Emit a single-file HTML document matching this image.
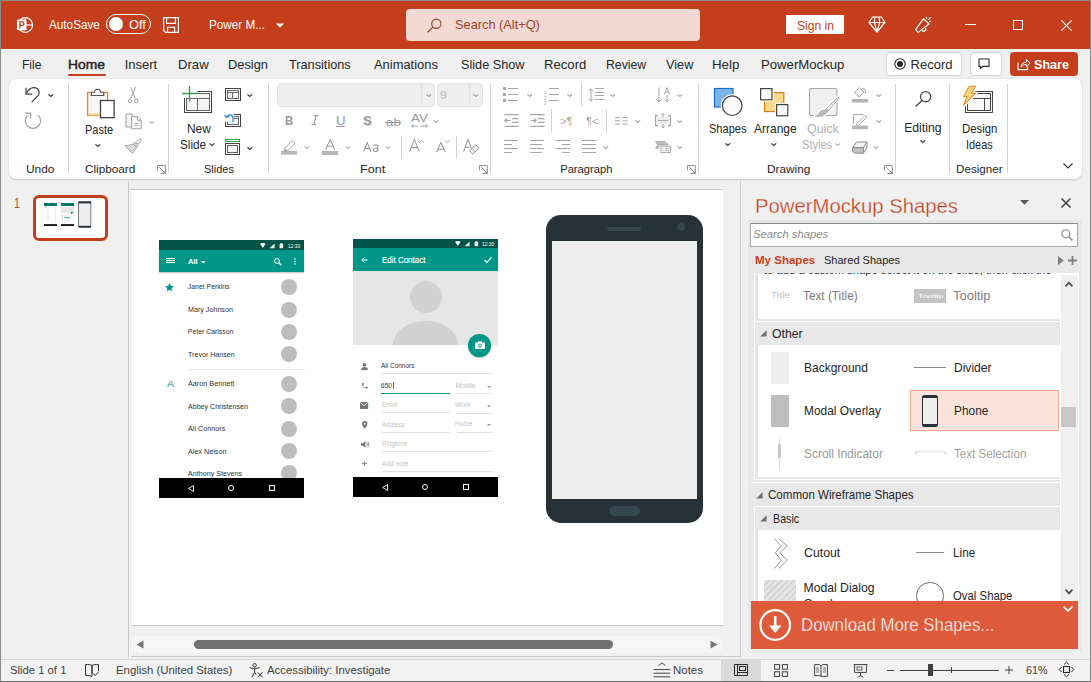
<!DOCTYPE html>
<html><head><meta charset="utf-8">
<style>
*{margin:0;padding:0;box-sizing:border-box}
html,body{width:1091px;height:682px;overflow:hidden;background:#f0f0f0;font-family:"Liberation Sans",sans-serif;color:#262626;position:relative}
.a{position:absolute}
.t{position:absolute;white-space:nowrap;line-height:1;transform-origin:0 0}
svg{overflow:visible}

</style></head><body>
<div class="a" style="left:0;top:0;width:1091px;height:682px;border:1px solid #8a8a8a;border-bottom-color:#6b6b6b"></div>
<div class="a" style="left:1px;top:1px;width:1089px;height:48px;background:#c43e1c"></div>
<div class="a" style="left:1px;top:49px;width:1089px;height:610px;background:#f0f0f0"></div>
<svg class="a" style="left:16px;top:16px" width="18" height="18" viewBox="0 0 18 18">
 <circle cx="9.3" cy="9" r="7.3" fill="none" stroke="#fff" stroke-width="1.2"/>
 <line x1="9.3" y1="1.7" x2="9.3" y2="9" stroke="#fff" stroke-width="1.2"/>
 <line x1="9.3" y1="9" x2="16.6" y2="9" stroke="#fff" stroke-width="1.2"/>
 <rect x="1" y="3.6" width="9.6" height="10.6" rx="0.6" fill="#fff"/>
 <path d="M3.9 12.3V5.9h2.2a1.75 1.75 0 0 1 0 3.5H3.9" fill="none" stroke="#c43e1c" stroke-width="1.4"/>
</svg>
<div class="t" style="left:49.00px;top:19.00px;font-size:12.60px;color:#fff;transform:scaleX(0.9315);">AutoSave</div>
<div class="a" style="left:106px;top:14px;width:45px;height:20px;border:1.3px solid #fff;border-radius:10px"></div>
<div class="a" style="left:109px;top:17px;width:14px;height:14px;background:#fff;border-radius:50%"></div>
<div class="t" style="left:128.70px;top:19.00px;font-size:12.60px;color:#fff;transform:scaleX(1.0183);">Off</div>
<svg class="a" style="left:163px;top:17px" width="16" height="16" viewBox="0 0 16 16">
 <path d="M0.6 0.6H15.4V15.4H2.6L0.6 13.4Z" fill="none" stroke="#fff" stroke-width="1.2"/>
 <path d="M3.6 0.6V6.4H12.4V0.6" fill="none" stroke="#fff" stroke-width="1.2"/>
 <path d="M4.6 15.4V10.4H11.6V15.4" fill="none" stroke="#fff" stroke-width="1.2"/>
</svg>
<div class="t" style="left:209.00px;top:19.00px;font-size:12.60px;color:#fff;transform:scaleX(0.9285);">Power M...</div>
<svg class="a" style="left:276px;top:23px" width="8" height="5" viewBox="0 0 8 5"><path d="M0 0.5h8L4 4.5z" fill="#fff"/></svg>
<div class="a" style="left:406px;top:9px;width:294px;height:32px;background:#f2d9d3;border-radius:4px"></div>
<svg class="a" style="left:427px;top:18px" width="15" height="15" viewBox="0 0 15 15">
 <circle cx="9.3" cy="5.7" r="4.6" fill="none" stroke="#a0432a" stroke-width="1.2"/>
 <line x1="6" y1="9" x2="0.6" y2="14.4" stroke="#a0432a" stroke-width="1.3"/>
</svg>
<div class="t" style="left:455.00px;top:19.00px;font-size:12.60px;color:#a0432a;transform:scaleX(1.0148);">Search (Alt+Q)</div>
<div class="a" style="left:786px;top:15px;width:58px;height:19px;background:#fff"></div>
<div class="t" style="left:797.00px;top:20.00px;font-size:12.60px;color:#c43e1c;transform:scaleX(0.9576);">Sign in</div>
<svg class="a" style="left:868px;top:16px" width="18" height="17" viewBox="0 0 18 17">
 <path d="M4.4 1.2h9.2l3.3 5.3L9 16 1 6.5z" fill="none" stroke="#fff" stroke-width="1.2" stroke-linejoin="round"/>
 <path d="M1 6.5h15.9M6.8 1.2L6.4 6.5 9 16M11.2 1.2l0.4 5.3L9 16" fill="none" stroke="#fff" stroke-width="1.1" stroke-linejoin="round"/>
</svg>
<svg class="a" style="left:914px;top:16px" width="18" height="18" viewBox="0 0 18 18">
 <path d="M1.6 13.6L9.6 2.6 15 8 4.2 16.4z" fill="none" stroke="#fff" stroke-width="1.2" stroke-linejoin="round"/>
 <path d="M8.2 14.4a1.9 1.9 0 0 0 3.2-2.4" fill="none" stroke="#fff" stroke-width="1.2"/>
 <path d="M12 1l0.9 1.8M14.2 3.9l2.4-2.6M15 5.4l1.8 0.2" fill="none" stroke="#fff" stroke-width="1.1"/>
</svg>
<div class="a" style="left:965px;top:24px;width:11px;height:1px;background:#fff"></div>
<div class="a" style="left:1013px;top:20px;width:10px;height:10px;border:1px solid #fff"></div>
<svg class="a" style="left:1060.5px;top:19.5px" width="11" height="11" viewBox="0 0 11 11"><path d="M0.3 0.3l10.4 10.4M10.7 0.3L0.3 10.7" stroke="#fff" stroke-width="1.1"/></svg>
<div class="t" style="left:22.30px;top:58.00px;font-size:13.00px;color:#262626;transform:scaleX(0.9264);">File</div>
<div class="t" style="left:68.10px;top:58.00px;font-size:13.00px;color:#262626;transform:scaleX(1.0641);-webkit-text-stroke:0.45px #262626;">Home</div>
<div class="t" style="left:124.70px;top:58.00px;font-size:13.00px;color:#262626;">Insert</div>
<div class="t" style="left:177.70px;top:58.00px;font-size:13.00px;color:#262626;transform:scaleX(1.0088);">Draw</div>
<div class="t" style="left:227.70px;top:58.00px;font-size:13.00px;color:#262626;transform:scaleX(0.9862);">Design</div>
<div class="t" style="left:289.20px;top:58.00px;font-size:13.00px;color:#262626;transform:scaleX(0.9778);">Transitions</div>
<div class="t" style="left:373.60px;top:58.00px;font-size:13.00px;color:#262626;transform:scaleX(0.9937);">Animations</div>
<div class="t" style="left:460.60px;top:58.00px;font-size:13.00px;color:#262626;transform:scaleX(0.9764);">Slide Show</div>
<div class="t" style="left:543.50px;top:58.00px;font-size:13.00px;color:#262626;transform:scaleX(1.0093);">Record</div>
<div class="t" style="left:605.70px;top:58.00px;font-size:13.00px;color:#262626;transform:scaleX(0.9433);">Review</div>
<div class="t" style="left:665.50px;top:58.00px;font-size:13.00px;color:#262626;transform:scaleX(0.9770);">View</div>
<div class="t" style="left:712.40px;top:58.00px;font-size:13.00px;color:#262626;transform:scaleX(1.0247);">Help</div>
<div class="t" style="left:761.40px;top:58.00px;font-size:13.00px;color:#262626;transform:scaleX(1.0126);">PowerMockup</div>
<div class="a" style="left:68px;top:74px;width:38px;height:2px;background:#c43e1c;border-radius:1px"></div>
<div class="a" style="left:886px;top:52px;width:76px;height:24px;background:#fff;border:1px solid #d6d6d6;border-radius:4px"></div>
<svg class="a" style="left:894px;top:58px" width="12" height="12" viewBox="0 0 12 12"><circle cx="6" cy="6" r="5.2" fill="none" stroke="#262626" stroke-width="1.1"/><circle cx="6" cy="6" r="3" fill="#262626"/></svg>
<div class="t" style="left:910.60px;top:58.00px;font-size:13.00px;color:#262626;">Record</div>
<div class="a" style="left:970px;top:52px;width:32px;height:24px;background:#fff;border:1px solid #d6d6d6;border-radius:4px"></div>
<svg class="a" style="left:978px;top:58px" width="12" height="12" viewBox="0 0 12 12"><path d="M1 1h10v7.4H4.4L2.4 10.6V8.4H1z" fill="none" stroke="#262626" stroke-width="1.1" stroke-linejoin="round"/></svg>
<div class="a" style="left:1010px;top:52px;width:68px;height:24px;background:#c43e1c;border-radius:4px"></div>
<svg class="a" style="left:1017px;top:57px" width="14" height="14" viewBox="0 0 14 14">
 <path d="M1 5.4v7.2h9.6V9.4" fill="none" stroke="#fff" stroke-width="1.1"/>
 <path d="M4 10.2c0.3-3.2 2.4-5 5.4-5V2.4l3.6 3.8-3.6 3.6V7.4C7.2 7.4 5.4 8.4 4 10.2z" fill="none" stroke="#fff" stroke-width="1" stroke-linejoin="round"/>
</svg>
<div class="t" style="left:1034.00px;top:58.00px;font-size:13.00px;color:#fff;font-weight:700;transform:scaleX(0.9659);">Share</div>
<div class="a" style="left:9px;top:79px;width:1073px;height:100px;background:#fff;border-radius:7px;box-shadow:0 0.5px 1.5px rgba(0,0,0,0.18)"></div>
<div class="a" style="left:68px;top:84px;width:1px;height:89px;background:#d4d4d4"></div>
<div class="a" style="left:168px;top:84px;width:1px;height:89px;background:#d4d4d4"></div>
<div class="a" style="left:268px;top:84px;width:1px;height:89px;background:#d4d4d4"></div>
<div class="a" style="left:490px;top:84px;width:1px;height:89px;background:#d4d4d4"></div>
<div class="a" style="left:698px;top:84px;width:1px;height:89px;background:#d4d4d4"></div>
<div class="a" style="left:895px;top:84px;width:1px;height:89px;background:#d4d4d4"></div>
<div class="a" style="left:949px;top:84px;width:1px;height:89px;background:#d4d4d4"></div>
<div class="a" style="left:1007px;top:84px;width:1px;height:89px;background:#d4d4d4"></div>
<div class="a" style="left:401px;top:136px;width:1px;height:23px;background:#d4d4d4"></div>
<div class="a" style="left:456px;top:136px;width:1px;height:23px;background:#d4d4d4"></div>
<div class="a" style="left:581px;top:83px;width:1px;height:24px;background:#d4d4d4"></div>
<div class="a" style="left:551px;top:109px;width:1px;height:24px;background:#d4d4d4"></div>
<div class="a" style="left:606px;top:109px;width:1px;height:24px;background:#d4d4d4"></div>
<div class="t" style="left:26.20px;top:164.00px;font-size:11.20px;color:#262626;transform:scaleX(1.0648);">Undo</div>
<div class="t" style="left:85.20px;top:164.00px;font-size:11.20px;color:#262626;transform:scaleX(1.0500);">Clipboard</div>
<div class="t" style="left:203.80px;top:164.00px;font-size:11.20px;color:#262626;transform:scaleX(0.9836);">Slides</div>
<div class="t" style="left:360.10px;top:164.00px;font-size:11.20px;color:#262626;transform:scaleX(1.1292);">Font</div>
<div class="t" style="left:560.20px;top:164.00px;font-size:11.20px;color:#262626;">Paragraph</div>
<div class="t" style="left:767.20px;top:164.00px;font-size:11.20px;color:#262626;transform:scaleX(1.0545);">Drawing</div>
<div class="t" style="left:955.90px;top:164.00px;font-size:11.20px;color:#262626;transform:scaleX(1.0403);">Designer</div>
<svg class="a" style="left:157px;top:165px" width="9" height="9" viewBox="0 0 9 9"><path d="M0.5 5.5V0.5h7.8v7.8H3.5M2 2l6 6M8.3 4.5v3.8H4.5" fill="none" stroke="#8a8a8a" stroke-width="0.9"/></svg>
<svg class="a" style="left:479px;top:165px" width="9" height="9" viewBox="0 0 9 9"><path d="M0.5 5.5V0.5h7.8v7.8H3.5M2 2l6 6M8.3 4.5v3.8H4.5" fill="none" stroke="#8a8a8a" stroke-width="0.9"/></svg>
<svg class="a" style="left:687px;top:165px" width="9" height="9" viewBox="0 0 9 9"><path d="M0.5 5.5V0.5h7.8v7.8H3.5M2 2l6 6M8.3 4.5v3.8H4.5" fill="none" stroke="#8a8a8a" stroke-width="0.9"/></svg>
<svg class="a" style="left:884px;top:165px" width="9" height="9" viewBox="0 0 9 9"><path d="M0.5 5.5V0.5h7.8v7.8H3.5M2 2l6 6M8.3 4.5v3.8H4.5" fill="none" stroke="#8a8a8a" stroke-width="0.9"/></svg>
<svg class="a" style="left:25px;top:86px" width="16" height="17" viewBox="0 0 16 17">
 <path d="M1.4 7.6C3.2 3.4 6.8 1.2 10 1.6c3.6 0.6 5 4.4 3.6 7.4L6.6 16.4" fill="none" stroke="#444" stroke-width="1.2"/>
 <path d="M1 1.8v6.4h6.2" fill="none" stroke="#444" stroke-width="1.2"/>
</svg>
<svg class="a" style="left:48.3px;top:94.0px" width="5.6" height="2.8" viewBox="0 0 5.6 2.8"><path d="M0.4 0.4L2.80 2.50L5.20 0.4" fill="none" stroke="#333" stroke-width="1.20"/></svg>
<svg class="a" style="left:24px;top:112px" width="18" height="18" viewBox="0 0 18 18">
 <path d="M3.6 3.4A7.6 7.6 0 1 0 13.9 2.9" fill="none" stroke="#a0a0a0" stroke-width="1.2"/>
 <path d="M1 1.2H6.6V6.6" fill="none" stroke="#a0a0a0" stroke-width="1.2"/>
</svg>
<svg class="a" style="left:86px;top:87px" width="30" height="32" viewBox="0 0 30 32">
 <rect x="1.6" y="5.5" width="20" height="23" fill="#f7f7f7" stroke="#e08a1e" stroke-width="1.3"/>
 <rect x="2.6" y="26.5" width="18" height="2" fill="#f6d38a"/>
 <path d="M5.4 8.5V5.3h3.2a3 3 0 0 1 6 0h3.2v3.2z" fill="#fff" stroke="#555" stroke-width="1.1" stroke-linejoin="round"/>
 <rect x="14.5" y="13.5" width="13.6" height="17.2" fill="#fff" stroke="#444" stroke-width="1.3"/>
</svg>
<div class="t" style="left:84.70px;top:124.00px;font-size:12.20px;color:#262626;transform:scaleX(0.9032);">Paste</div>
<svg class="a" style="left:95.0px;top:144.0px" width="5.6" height="2.8" viewBox="0 0 5.6 2.8"><path d="M0.4 0.4L2.80 2.50L5.20 0.4" fill="none" stroke="#333" stroke-width="1.20"/></svg>
<svg class="a" style="left:127px;top:86px" width="12" height="17" viewBox="0 0 12 17">
 <path d="M3.6 1L8.4 12.6M8.6 1L3.8 12.6" fill="none" stroke="#a0a0a0" stroke-width="1"/>
 <circle cx="3" cy="15" r="1.7" fill="none" stroke="#a0a0a0" stroke-width="1"/>
 <circle cx="9.2" cy="15" r="1.7" fill="none" stroke="#a0a0a0" stroke-width="1"/>
</svg>
<svg class="a" style="left:124.5px;top:112.5px" width="18" height="17" viewBox="0 0 18 17">
 <path d="M7.2 3.4V1H1v13h5" fill="#f6f6f6" stroke="#a0a0a0" stroke-width="1"/>
 <path d="M6.6 3.6h6l3.6 3.6v8.6H6.6z" fill="#f6f6f6" stroke="#a0a0a0" stroke-width="1"/>
 <path d="M12.4 3.6v3.8h3.8M9.4 10.6h4M9.4 12.4h4" fill="none" stroke="#a0a0a0" stroke-width="0.8"/>
</svg>
<svg class="a" style="left:149.0px;top:120.5px" width="5.6" height="2.8" viewBox="0 0 5.6 2.8"><path d="M0.4 0.4L2.80 2.50L5.20 0.4" fill="none" stroke="#b5b5b5" stroke-width="1.20"/></svg>
<svg class="a" style="left:124px;top:138px" width="18" height="17" viewBox="0 0 18 17">
 <path d="M15.2 1.2a1.2 1.2 0 0 1 1.7 1.7L13.6 6.2 12 4.6z" fill="#fff" stroke="#a0a0a0" stroke-width="1" stroke-linejoin="round"/>
 <path d="M11 4.2l3.4 3.4-2 2L9 6.2z" fill="#d0d0d0" stroke="#a0a0a0" stroke-width="0.9"/>
 <path d="M9 6.2l3.4 3.4-3.8 5.8L1 8z" fill="#e6e6e6" stroke="#a0a0a0" stroke-width="1" stroke-linejoin="round"/>
 <path d="M4 8.8l5 5M6.2 8l4 4" stroke="#bdbdbd" stroke-width="0.8"/>
</svg>
<svg class="a" style="left:181px;top:85px" width="33" height="29" viewBox="0 0 33 29">
 <rect x="3.5" y="6.5" width="27" height="21" fill="#fff" stroke="#444" stroke-width="1"/>
 <rect x="5.5" y="8.5" width="23" height="17" fill="#f5f5f5" stroke="#666" stroke-width="1"/>
 <path d="M5.5 13.5h23M16.5 13.5v12" fill="none" stroke="#666" stroke-width="1"/>
 <rect x="2.5" y="5" width="13.5" height="8" fill="#fff"/>
 <path d="M8.5 1v15.4M1 8.5h15" fill="none" stroke="#2e9e47" stroke-width="1.3"/>
</svg>
<div class="t" style="left:186.90px;top:123.00px;font-size:12.20px;color:#262626;transform:scaleX(0.9780);">New</div>
<div class="t" style="left:180.10px;top:139.00px;font-size:12.20px;color:#262626;transform:scaleX(0.9611);">Slide</div>
<svg class="a" style="left:208.6px;top:143.0px" width="5.7" height="2.9" viewBox="0 0 5.7 2.9"><path d="M0.4 0.4L2.85 2.55L5.30 0.4" fill="none" stroke="#333" stroke-width="1.20"/></svg>
<svg class="a" style="left:225px;top:88px" width="17" height="14" viewBox="0 0 17 14">
 <rect x="0.5" y="0.5" width="15" height="12" fill="#fff" stroke="#444" stroke-width="1"/>
 <rect x="2.5" y="2.5" width="11" height="8" fill="#f5f5f5" stroke="#666" stroke-width="1"/>
 <path d="M2.5 4.5h11M7.5 4.5v6" fill="none" stroke="#666" stroke-width="1"/>
</svg>
<svg class="a" style="left:246.8px;top:94.0px" width="5.6" height="2.8" viewBox="0 0 5.6 2.8"><path d="M0.4 0.4L2.80 2.50L5.20 0.4" fill="none" stroke="#333" stroke-width="1.20"/></svg>
<svg class="a" style="left:224px;top:112px" width="18" height="16" viewBox="0 0 18 16">
 <rect x="1.5" y="2.5" width="15" height="12" fill="#fff" stroke="#444" stroke-width="1"/>
 <rect x="3.5" y="4.5" width="11" height="8" fill="#f5f5f5" stroke="#666" stroke-width="1"/>
 <path d="M3.5 6.5h11" fill="none" stroke="#666" stroke-width="1"/>
 <rect x="0" y="0" width="9.6" height="9.6" fill="#fff"/>
 <path d="M2.6 5.4C3.6 2.4 8.6 1.6 9 6.2v3.8" fill="none" stroke="#2b88d8" stroke-width="1.2"/>
 <path d="M0.6 2.8L2.6 5.6 5.4 3.8" fill="none" stroke="#2b88d8" stroke-width="1.2"/>
</svg>
<svg class="a" style="left:225px;top:139px" width="16" height="17" viewBox="0 0 16 17">
 <rect x="0.5" y="0.5" width="14" height="2" fill="#fff" stroke="#27a744" stroke-width="1"/>
 <rect x="0.5" y="4.5" width="14" height="11" fill="#fff" stroke="#444" stroke-width="1"/>
 <rect x="2.5" y="6.5" width="10" height="7" fill="#f5f5f5" stroke="#666" stroke-width="1"/>
</svg>
<svg class="a" style="left:246.8px;top:146.5px" width="5.6" height="2.8" viewBox="0 0 5.6 2.8"><path d="M0.4 0.4L2.80 2.50L5.20 0.4" fill="none" stroke="#333" stroke-width="1.20"/></svg>
<div class="a" style="left:277px;top:83px;width:158px;height:24px;background:#efefef;border:1px solid #e2e2e2;border-radius:4px"></div>
<div class="a" style="left:421px;top:84px;width:1px;height:22px;background:#e0e0e0"></div>
<svg class="a" style="left:425.5px;top:93.5px" width="5.6" height="2.8" viewBox="0 0 5.6 2.8"><path d="M0.4 0.4L2.80 2.50L5.20 0.4" fill="none" stroke="#a0a0a0" stroke-width="1.20"/></svg>
<div class="a" style="left:437px;top:83px;width:46px;height:24px;background:#efefef;border:1px solid #e2e2e2;border-radius:4px"></div>
<div class="a" style="left:469px;top:84px;width:1px;height:22px;background:#e0e0e0"></div>
<svg class="a" style="left:473.4px;top:93.5px" width="5.6" height="2.8" viewBox="0 0 5.6 2.8"><path d="M0.4 0.4L2.80 2.50L5.20 0.4" fill="none" stroke="#a0a0a0" stroke-width="1.20"/></svg>
<div class="t" style="left:439.80px;top:90.00px;font-size:11.00px;color:#b4b4b4;transform:scaleX(1.1053);">9</div>
<div class="t" style="left:285.30px;top:115.00px;font-size:12.00px;color:#9a9a9a;font-weight:700;transform:scaleX(0.9502);">B</div>
<svg class="a" style="left:311px;top:115px" width="8" height="10" viewBox="0 0 8 10"><path d="M2.8 0.6h4.6M0.6 9.5h4.6M5.1 0.6L2.9 9.5" fill="none" stroke="#9a9a9a" stroke-width="1.1"/></svg>
<div class="t" style="left:336.20px;top:115.00px;font-size:12.00px;color:#9a9a9a;transform:scaleX(1.1116);">U</div>
<div class="a" style="left:336px;top:126px;width:9px;height:1px;background:#9a9a9a"></div>
<div class="t" style="left:362.50px;top:115.00px;font-size:12.50px;color:#9a9a9a;font-weight:700;transform:scaleX(1.0397);text-shadow:1px 1px 1px #cfcfcf;">S</div>
<div class="t" style="left:386.00px;top:117.00px;font-size:11.00px;color:#9a9a9a;transform:scaleX(1.2057);">ab</div>
<div class="a" style="left:385px;top:122px;width:16px;height:1px;background:#9a9a9a"></div>
<div class="t" style="left:411.00px;top:113.00px;font-size:11.50px;color:#9a9a9a;transform:scaleX(1.1590);">AV</div>
<svg class="a" style="left:411px;top:123px" width="17" height="6" viewBox="0 0 17 6"><path d="M0.5 3h6.5M2.6 1L0.5 3l2.1 2M9.5 3h7M14.4 1l2.1 2-2.1 2" fill="none" stroke="#9a9a9a" stroke-width="0.9"/></svg>
<svg class="a" style="left:432.8px;top:120.0px" width="5.6" height="2.8" viewBox="0 0 5.6 2.8"><path d="M0.4 0.4L2.80 2.50L5.20 0.4" fill="none" stroke="#a6a6a6" stroke-width="1.20"/></svg>
<svg class="a" style="left:281px;top:139px" width="17" height="16" viewBox="0 0 17 16">
 <path d="M3.6 9.6L10.4 2.4a1.6 1.6 0 0 1 2.4 0l0.4 0.4a1.6 1.6 0 0 1 0 2.4L6.4 12z" fill="#fff" stroke="#a6a6a6" stroke-width="1"/>
 <path d="M3.6 9.6l-1.6 2.8 1.6 0.2 2.8-0.6z" fill="#a6a6a6"/>
 <rect x="0" y="12" width="16" height="3.6" fill="#b6b6b6"/>
</svg>
<svg class="a" style="left:304.3px;top:146.0px" width="5.6" height="2.8" viewBox="0 0 5.6 2.8"><path d="M0.4 0.4L2.80 2.50L5.20 0.4" fill="none" stroke="#b5b5b5" stroke-width="1.20"/></svg>
<svg class="a" style="left:325px;top:139px" width="11" height="11" viewBox="0 0 11 11"><path d="M0.6 10.8L5.2 0.5l4.6 10.3M2.2 7.2h6" fill="none" stroke="#9a9a9a" stroke-width="1.1"/></svg>
<div class="a" style="left:322px;top:151px;width:16px;height:4px;background:#b6b6b6"></div>
<svg class="a" style="left:345.4px;top:146.0px" width="5.6" height="2.8" viewBox="0 0 5.6 2.8"><path d="M0.4 0.4L2.80 2.50L5.20 0.4" fill="none" stroke="#b5b5b5" stroke-width="1.20"/></svg>
<svg class="a" style="left:363px;top:142px" width="17" height="10" viewBox="0 0 17 10"><path d="M0.6 9.6L4.2 0.6l3.6 9M1.8 6.6h4.8" fill="none" stroke="#9a9a9a" stroke-width="1.1"/><path d="M10.6 3.6c0.6-0.6 1.4-0.8 2.2-0.8 1.4 0 2 0.8 2 2v4.8M14.8 6c-2.4 0-4.4 0.4-4.4 2 0 1 0.8 1.6 1.8 1.6 1.4 0 2.6-1.2 2.6-2.6" fill="none" stroke="#9a9a9a" stroke-width="1.1"/></svg>
<svg class="a" style="left:384.7px;top:146.0px" width="5.6" height="2.8" viewBox="0 0 5.6 2.8"><path d="M0.4 0.4L2.80 2.50L5.20 0.4" fill="none" stroke="#b5b5b5" stroke-width="1.20"/></svg>
<svg class="a" style="left:409px;top:139px" width="12" height="13" viewBox="0 0 12 13"><path d="M0.6 12.6L5.4 0.4l4.8 12.2M2.2 8.6h6.4" fill="none" stroke="#9a9a9a" stroke-width="1.1"/></svg>
<svg class="a" style="left:419px;top:140px" width="5" height="3" viewBox="0 0 5 3"><path d="M0.3 2.7L2.5 0.4l2.2 2.3" fill="none" stroke="#9a9a9a" stroke-width="0.9"/></svg>
<svg class="a" style="left:436px;top:141.5px" width="10" height="11" viewBox="0 0 10 11"><path d="M0.6 10.1L4.9 0.5l4.3 9.6M2 7.2h5.8" fill="none" stroke="#9a9a9a" stroke-width="1.1"/></svg>
<svg class="a" style="left:445px;top:140px" width="5" height="3" viewBox="0 0 5 3"><path d="M0.3 0.3L2.5 2.6l2.2-2.3" fill="none" stroke="#9a9a9a" stroke-width="0.9"/></svg>
<svg class="a" style="left:463px;top:139px" width="17" height="16" viewBox="0 0 17 16"><path d="M0.6 12.6L5 0.4l3.6 9.6M1.8 8.4h4.6" fill="none" stroke="#9a9a9a" stroke-width="1.1"/><path d="M6.6 11.6l6.4-5.8 3.2 3.4-6.6 5.8z" fill="#f0f0f0" stroke="#9a9a9a" stroke-width="1"/><path d="M9 9.4l3.2 3.4" stroke="#9a9a9a" stroke-width="0.9"/></svg>
<div class="a" style="left:503px;top:87.2px;width:3px;height:3px;background:#a6a6a6"></div>
<div class="a" style="left:503px;top:93.2px;width:3px;height:3px;background:#a6a6a6"></div>
<div class="a" style="left:503px;top:99.3px;width:3px;height:3px;background:#a6a6a6"></div>
<div class="a" style="left:508.0px;top:88.0px;width:10.0px;height:1.2px;background:#a6a6a6"></div>
<div class="a" style="left:508.0px;top:94.0px;width:10.0px;height:1.2px;background:#a6a6a6"></div>
<div class="a" style="left:508.0px;top:100.0px;width:10.0px;height:1.2px;background:#a6a6a6"></div>
<svg class="a" style="left:526.7px;top:94.0px" width="5.6" height="2.8" viewBox="0 0 5.6 2.8"><path d="M0.4 0.4L2.80 2.50L5.20 0.4" fill="none" stroke="#a6a6a6" stroke-width="1.20"/></svg>
<div class="t" style="left:544.00px;top:91.00px;font-size:4.60px;color:#a6a6a6;">1</div>
<div class="t" style="left:544.00px;top:97.00px;font-size:4.60px;color:#a6a6a6;">2</div>
<div class="t" style="left:544.00px;top:102.00px;font-size:4.60px;color:#a6a6a6;">3</div>
<div class="a" style="left:549.0px;top:88.0px;width:10.0px;height:1.2px;background:#a6a6a6"></div>
<div class="a" style="left:549.0px;top:94.0px;width:10.0px;height:1.2px;background:#a6a6a6"></div>
<div class="a" style="left:549.0px;top:100.0px;width:10.0px;height:1.2px;background:#a6a6a6"></div>
<svg class="a" style="left:567.4px;top:94.0px" width="5.6" height="2.8" viewBox="0 0 5.6 2.8"><path d="M0.4 0.4L2.80 2.50L5.20 0.4" fill="none" stroke="#a6a6a6" stroke-width="1.20"/></svg>
<svg class="a" style="left:587.5px;top:87.5px" width="6" height="14" viewBox="0 0 6 14"><path d="M3 0.8v12.4M0.6 3.2L3 0.8l2.4 2.4M0.6 10.8L3 13.2l2.4-2.4" fill="none" stroke="#a6a6a6" stroke-width="1"/></svg>
<div class="a" style="left:595.0px;top:88.0px;width:9.0px;height:1.2px;background:#a6a6a6"></div>
<div class="a" style="left:595.0px;top:91.6px;width:9.0px;height:1.2px;background:#a6a6a6"></div>
<div class="a" style="left:595.0px;top:95.2px;width:9.0px;height:1.2px;background:#a6a6a6"></div>
<div class="a" style="left:595.0px;top:98.8px;width:9.0px;height:1.2px;background:#a6a6a6"></div>
<div class="a" style="left:595.0px;top:100.8px;width:0.0px;height:1.2px;background:#a6a6a6"></div>
<svg class="a" style="left:609.8px;top:94.0px" width="5.6" height="2.8" viewBox="0 0 5.6 2.8"><path d="M0.4 0.4L2.80 2.50L5.20 0.4" fill="none" stroke="#a6a6a6" stroke-width="1.20"/></svg>
<svg class="a" style="left:656px;top:87px" width="15" height="16" viewBox="0 0 15 16"><path d="M3 0.5v14.5M0.4 12.2L3 15l2.6-2.8M11 8v7M8.6 12.4L11 15l2.4-2.6" fill="none" stroke="#a6a6a6" stroke-width="1"/><path d="M8.4 7.4l2.6-6.8 2.6 6.8M9.4 5h3.2" fill="none" stroke="#a6a6a6" stroke-width="1"/></svg>
<svg class="a" style="left:676.7px;top:94.0px" width="5.6" height="2.8" viewBox="0 0 5.6 2.8"><path d="M0.4 0.4L2.80 2.50L5.20 0.4" fill="none" stroke="#a6a6a6" stroke-width="1.20"/></svg>
<svg class="a" style="left:503.5px;top:114px" width="15" height="13" viewBox="0 0 15 13"><path d="M0.4 0.6h14.2M0.4 12.4h14.2M8 4.6h6.6M8 8.4h6.6M1 6.5h5.4M3 4.4L0.8 6.5 3 8.6" fill="none" stroke="#a6a6a6" stroke-width="1.1"/></svg>
<svg class="a" style="left:529.5px;top:114px" width="15" height="13" viewBox="0 0 15 13"><path d="M0.4 0.6h14.2M0.4 12.4h14.2M8 4.6h6.6M8 8.4h6.6M0.6 6.5h5.4M4 4.4l2.2 2.1L4 8.6" fill="none" stroke="#a6a6a6" stroke-width="1.1"/></svg>
<div class="t" style="left:560.00px;top:116.00px;font-size:10.50px;color:#a6a6a6;transform:scaleX(1.0555);">&gt;&#182;</div>
<div class="t" style="left:586.00px;top:116.00px;font-size:10.50px;color:#a6a6a6;transform:scaleX(1.0555);">&#182;&lt;</div>
<svg class="a" style="left:614.5px;top:116.5px" width="13" height="8" viewBox="0 0 13 8"><path d="M0 0.6h5M0 3.8h5M0 7h5M7.6 0.6h5M7.6 3.8h5M7.6 7h5" fill="none" stroke="#a6a6a6" stroke-width="1"/></svg>
<svg class="a" style="left:634.5px;top:120.0px" width="5.6" height="2.8" viewBox="0 0 5.6 2.8"><path d="M0.4 0.4L2.80 2.50L5.20 0.4" fill="none" stroke="#a6a6a6" stroke-width="1.20"/></svg>
<svg class="a" style="left:655px;top:113px" width="16" height="15" viewBox="0 0 16 15"><path d="M3 2.6H0.6v10h2.4M13 2.6h2.4v10H13" fill="none" stroke="#a6a6a6" stroke-width="1.2"/><rect x="2" y="3.6" width="12" height="8" fill="#efefef"/><path d="M3 7.6h10M8 0.4v4M6.2 2.2L8 0.4l1.8 1.8M8 11v4M6.2 13.2L8 15l1.8-1.8" fill="none" stroke="#a6a6a6" stroke-width="1"/></svg>
<svg class="a" style="left:676.7px;top:120.0px" width="5.6" height="2.8" viewBox="0 0 5.6 2.8"><path d="M0.4 0.4L2.80 2.50L5.20 0.4" fill="none" stroke="#a6a6a6" stroke-width="1.20"/></svg>
<div class="a" style="left:504.0px;top:140.0px;width:14.0px;height:1.2px;background:#a6a6a6"></div>
<div class="a" style="left:504.0px;top:144.0px;width:8.0px;height:1.2px;background:#a6a6a6"></div>
<div class="a" style="left:504.0px;top:148.0px;width:14.0px;height:1.2px;background:#a6a6a6"></div>
<div class="a" style="left:504.0px;top:152.0px;width:8.0px;height:1.2px;background:#a6a6a6"></div>
<div class="a" style="left:530.0px;top:140.0px;width:14.0px;height:1.2px;background:#a6a6a6"></div>
<div class="a" style="left:530.0px;top:144.0px;width:10.0px;height:1.2px;background:#a6a6a6"></div>
<div class="a" style="left:530.0px;top:148.0px;width:14.0px;height:1.2px;background:#a6a6a6"></div>
<div class="a" style="left:530.0px;top:152.0px;width:10.0px;height:1.2px;background:#a6a6a6"></div>
<div class="a" style="left:532px;top:144px;width:10px;height:1.2px;background:#fff"></div>
<div class="a" style="left:532.0px;top:144.0px;width:10.0px;height:1.2px;background:#a6a6a6"></div>
<div class="a" style="left:532.0px;top:152.0px;width:10.0px;height:1.2px;background:#a6a6a6"></div>
<div class="a" style="left:556.0px;top:140.0px;width:14.0px;height:1.2px;background:#a6a6a6"></div>
<div class="a" style="left:556.0px;top:144.0px;width:8.0px;height:1.2px;background:#a6a6a6"></div>
<div class="a" style="left:556.0px;top:148.0px;width:14.0px;height:1.2px;background:#a6a6a6"></div>
<div class="a" style="left:556.0px;top:152.0px;width:8.0px;height:1.2px;background:#a6a6a6"></div>
<div class="a" style="left:556px;top:144px;width:6px;height:1.2px;background:#fff"></div><div class="a" style="left:556px;top:152px;width:6px;height:1.2px;background:#fff"></div>
<div class="a" style="left:562.0px;top:144.0px;width:8.0px;height:1.2px;background:#a6a6a6"></div>
<div class="a" style="left:562.0px;top:152.0px;width:8.0px;height:1.2px;background:#a6a6a6"></div>
<div class="a" style="left:582.0px;top:140.0px;width:14.0px;height:1.2px;background:#a6a6a6"></div>
<div class="a" style="left:582.0px;top:144.0px;width:14.0px;height:1.2px;background:#a6a6a6"></div>
<div class="a" style="left:582.0px;top:148.0px;width:14.0px;height:1.2px;background:#a6a6a6"></div>
<div class="a" style="left:582.0px;top:152.0px;width:14.0px;height:1.2px;background:#a6a6a6"></div>
<svg class="a" style="left:602.7px;top:146.0px" width="5.6" height="2.8" viewBox="0 0 5.6 2.8"><path d="M0.4 0.4L2.80 2.50L5.20 0.4" fill="none" stroke="#a6a6a6" stroke-width="1.20"/></svg>
<svg class="a" style="left:655px;top:141px" width="16" height="12" viewBox="0 0 16 12"><path d="M0.5 0.5h9.5l3.4 3.4H4.6l-1.6 3.4H0.5l2.4-3.4z" fill="#bdbdbd" stroke="#a6a6a6" stroke-width="0.8"/><rect x="6" y="5.2" width="9.4" height="6.4" fill="#fff" stroke="#a6a6a6" stroke-width="1"/><path d="M7.6 7.4h1M10 7.4h4M7.6 9.6h1M10 9.6h4" stroke="#a6a6a6" stroke-width="0.9"/></svg>
<svg class="a" style="left:676.7px;top:146.0px" width="5.6" height="2.8" viewBox="0 0 5.6 2.8"><path d="M0.4 0.4L2.80 2.50L5.20 0.4" fill="none" stroke="#a6a6a6" stroke-width="1.20"/></svg>
<svg class="a" style="left:713px;top:87px" width="31" height="30" viewBox="0 0 31 30">
 <rect x="1.5" y="1.5" width="18.5" height="18.5" fill="#7ab5ea" stroke="#1e6fc4" stroke-width="1.2"/>
 <circle cx="19.2" cy="18.7" r="9.8" fill="#fff" stroke="#fff" stroke-width="3.4"/>
 <circle cx="19.2" cy="18.7" r="9.8" fill="#fafafa" stroke="#444" stroke-width="1.2"/>
</svg>
<div class="t" style="left:709.10px;top:123.00px;font-size:12.20px;color:#262626;transform:scaleX(0.9059);">Shapes</div>
<svg class="a" style="left:725.0px;top:142.5px" width="5.6" height="2.8" viewBox="0 0 5.6 2.8"><path d="M0.4 0.4L2.80 2.50L5.20 0.4" fill="none" stroke="#333" stroke-width="1.20"/></svg>
<svg class="a" style="left:759px;top:87px" width="30" height="30" viewBox="0 0 30 30">
 <rect x="5.6" y="5.6" width="19.2" height="19" fill="#f8d88c" stroke="#e07b12" stroke-width="1.2"/>
 <rect x="1.6" y="1.6" width="11.4" height="11.2" fill="#fff" stroke="#fff" stroke-width="3.4"/>
 <rect x="1.6" y="1.6" width="11.4" height="11.2" fill="#fafafa" stroke="#444" stroke-width="1.2"/>
 <rect x="17.6" y="17.6" width="11.2" height="11.2" fill="#fff" stroke="#fff" stroke-width="3.4"/>
 <rect x="17.6" y="17.6" width="11.2" height="11.2" fill="#fafafa" stroke="#444" stroke-width="1.2"/>
</svg>
<div class="t" style="left:753.50px;top:123.00px;font-size:12.20px;color:#262626;transform:scaleX(0.9837);">Arrange</div>
<svg class="a" style="left:770.8px;top:142.5px" width="5.6" height="2.8" viewBox="0 0 5.6 2.8"><path d="M0.4 0.4L2.80 2.50L5.20 0.4" fill="none" stroke="#333" stroke-width="1.20"/></svg>
<svg class="a" style="left:808px;top:87px" width="33" height="31" viewBox="0 0 33 31">
 <rect x="1.5" y="1.5" width="27.5" height="27" rx="2" fill="#f0f0f0" stroke="#a8a8a8" stroke-width="1.1"/>
 <path d="M29.6 10.6c0.8-0.8 1.8 0.2 1 1L20.6 23.6 18.6 21.6z M17 23.2c-3-0.6-5.4 1.4-6.4 3.6-0.6 1.2-1.6 2-3.2 2.4 3.6 0.8 8.6 0.6 11.6-4.4z" fill="#fff" stroke="#fff" stroke-width="3" stroke-linejoin="round"/>
 <path d="M29.6 10.6c0.8-0.8 1.8 0.2 1 1L20.6 23.6 18.6 21.6z" fill="#f4f4f4" stroke="#a8a8a8" stroke-width="1"/>
 <path d="M18.6 21.6l2 2-1.6 1.6-2-2z" fill="#c8c8c8" stroke="#a8a8a8" stroke-width="0.8"/>
 <path d="M17 23.2c-3-0.6-5.4 1.4-6.4 3.6-0.6 1.2-1.6 2-3.2 2.4 3.6 0.8 8.6 0.6 11.6-4.4z" fill="#bdbdbd" stroke="#a8a8a8" stroke-width="0.8"/>
</svg>
<div class="t" style="left:807.20px;top:123.00px;font-size:12.20px;color:#b2b2b2;transform:scaleX(1.0160);">Quick</div>
<div class="t" style="left:802.30px;top:139.00px;font-size:12.20px;color:#b2b2b2;transform:scaleX(0.9082);">Styles</div>
<svg class="a" style="left:835.4px;top:143.1px" width="5.6" height="2.8" viewBox="0 0 5.6 2.8"><path d="M0.4 0.4L2.80 2.50L5.20 0.4" fill="none" stroke="#b5b5b5" stroke-width="1.20"/></svg>
<svg class="a" style="left:852px;top:86px" width="16" height="17" viewBox="0 0 16 17">
 <path d="M2.6 6.4L7.4 1.6l4.6 4.6-4.8 4.8z" fill="#fff" stroke="#a0a0a0" stroke-width="1" stroke-linejoin="round"/>
 <path d="M9.6 3.2c1.4-1.6 3.6-1 3.6 1.4v3.2" fill="none" stroke="#a0a0a0" stroke-width="1"/>
 <rect x="0" y="13" width="16" height="3.6" fill="#b6b6b6"/>
</svg>
<svg class="a" style="left:875.5px;top:94.0px" width="5.6" height="2.8" viewBox="0 0 5.6 2.8"><path d="M0.4 0.4L2.80 2.50L5.20 0.4" fill="none" stroke="#a6a6a6" stroke-width="1.20"/></svg>
<svg class="a" style="left:852px;top:112.5px" width="16" height="17" viewBox="0 0 16 17">
 <path d="M1.6 10.6V1.6h10" fill="none" stroke="#a6a6a6" stroke-width="1"/>
 <path d="M5 10.4l7.6-7.6a1.3 1.3 0 0 1 1.8 1.8L6.8 12.2 4.4 12.8z" fill="#fff" stroke="#a6a6a6" stroke-width="1"/>
 <rect x="0" y="12.6" width="16" height="3.6" fill="#b6b6b6"/>
</svg>
<svg class="a" style="left:875.5px;top:120.0px" width="5.6" height="2.8" viewBox="0 0 5.6 2.8"><path d="M0.4 0.4L2.80 2.50L5.20 0.4" fill="none" stroke="#a6a6a6" stroke-width="1.20"/></svg>
<svg class="a" style="left:852px;top:140.5px" width="16" height="13" viewBox="0 0 16 13">
 <path d="M0.6 6.6l4-5.6h10.4l-3.6 5.6z" fill="#f2f2f2" stroke="#8a8a8a" stroke-width="1"/>
 <path d="M0.6 6.6v3.6l2 2h8.8v-5.6z" fill="#c4c4c4" stroke="#8a8a8a" stroke-width="1"/>
 <path d="M11.4 12.2l3.6-5.6V1" fill="none" stroke="#8a8a8a" stroke-width="1"/>
</svg>
<svg class="a" style="left:873.3px;top:146.0px" width="5.6" height="2.8" viewBox="0 0 5.6 2.8"><path d="M0.4 0.4L2.80 2.50L5.20 0.4" fill="none" stroke="#a6a6a6" stroke-width="1.20"/></svg>
<svg class="a" style="left:915px;top:91px" width="17" height="16" viewBox="0 0 17 16"><circle cx="10.6" cy="5.8" r="5.1" fill="none" stroke="#444" stroke-width="1.2"/><path d="M7 9.6L0.6 15.4" stroke="#444" stroke-width="1.3"/></svg>
<div class="t" style="left:904.20px;top:122.00px;font-size:12.20px;color:#262626;">Editing</div>
<svg class="a" style="left:919.6px;top:140.4px" width="5.6" height="2.8" viewBox="0 0 5.6 2.8"><path d="M0.4 0.4L2.80 2.50L5.20 0.4" fill="none" stroke="#333" stroke-width="1.20"/></svg>
<svg class="a" style="left:962px;top:85px" width="32" height="29" viewBox="0 0 32 29">
 <rect x="3.5" y="6.5" width="27" height="21" fill="#fff" stroke="#333" stroke-width="0.9"/>
 <rect x="5.5" y="8.5" width="23" height="17" fill="#f8f8f8" stroke="#333" stroke-width="0.9"/>
 <path d="M5.5 13.5h23M22.5 13.5v12" stroke="#333" stroke-width="0.9"/>
 <path d="M7 1.2H13.6L9.6 8.2H13.6L1.5 20.6L5 11.6H1.5Z" fill="#fff" stroke="#fff" stroke-width="3.6" stroke-linejoin="round"/>
 <path d="M7 1.2H13.6L9.6 8.2H13.6L1.5 20.6L5 11.6H1.5Z" fill="#f9d57e" stroke="#e8821e" stroke-width="1" stroke-linejoin="round"/>
</svg>
<div class="t" style="left:961.90px;top:123.00px;font-size:12.20px;color:#262626;transform:scaleX(0.9293);">Design</div>
<div class="t" style="left:965.90px;top:139.00px;font-size:12.20px;color:#262626;transform:scaleX(0.8936);">Ideas</div>
<svg class="a" style="left:1062.5px;top:162.5px" width="10" height="6" viewBox="0 0 10 6"><path d="M0.5 0.5L5 5 9.5 0.5" fill="none" stroke="#333" stroke-width="1.1"/></svg>
<div class="a" style="left:128px;top:181px;width:1px;height:476px;background:#c8c8c8"></div>
<div class="t" style="left:14.00px;top:196.00px;font-size:14.00px;color:#c43e1c;transform:scaleX(0.7670);">1</div>
<div class="a" style="left:33px;top:195px;width:75px;height:46px;border:3px solid #c43e1c;border-radius:6px;background:#fff"></div>
<svg class="a" style="left:43px;top:201px" width="50" height="28" viewBox="0 0 50 28">
 <rect x="1" y="2" width="13" height="3" fill="#00796b"/>
 <rect x="1" y="23.2" width="13" height="1.7" fill="#000"/>
 <path d="M3.2 6h3M3.2 8h3M3.2 10h3M3.2 13h3M3.2 15h3M3.2 17h3M3.2 19h3" stroke="#d0d0d0" stroke-width="0.6"/>
 <circle cx="2.5" cy="6" r="0.5" fill="#009688"/>
 <path d="M12.6 5.6v17" stroke="#c8c8c8" stroke-width="0.8" stroke-dasharray="1 1.2"/>
 <rect x="18" y="2" width="13" height="3" fill="#00796b"/>
 <rect x="18" y="5.8" width="13" height="6" fill="#e6e6e6"/>
 <circle cx="28.8" cy="11.8" r="1.1" fill="#009688"/>
 <path d="M21 15h8M21 17.6h8M21 19.8h8" stroke="#e0e0e0" stroke-width="0.5"/>
 <path d="M21 16.4h6" stroke="#009688" stroke-width="0.7"/>
 <path d="M19.2 14.6h0.8M19.2 16.6h0.8M19.2 18.6h0.8" stroke="#888" stroke-width="0.8"/>
 <rect x="18" y="23.2" width="13" height="1.7" fill="#000"/>
 <rect x="35.2" y="0.2" width="13" height="26.6" rx="1" fill="#263238"/>
 <rect x="35.8" y="2.4" width="11.8" height="22.4" fill="#eeeeee"/>
</svg>
<div class="a" style="left:131px;top:189px;width:592px;height:437px;background:#fff;border-top:1px solid #c8c8c8;border-bottom:1px solid #c8c8c8"></div>
<div class="a" style="left:131px;top:636px;width:592px;height:17px;background:#f6f6f6;border-radius:8px"></div>
<svg class="a" style="left:135.5px;top:640px" width="8" height="9" viewBox="0 0 8 9"><path d="M7.5 0.5v8L0.5 4.5z" fill="#777"/></svg>
<svg class="a" style="left:710px;top:640px" width="8" height="9" viewBox="0 0 8 9"><path d="M0.5 0.5v8l7-4z" fill="#777"/></svg>
<div class="a" style="left:194px;top:640px;width:419px;height:9px;background:#707070;border-radius:4.5px"></div>
<div class="a" style="left:131px;top:656px;width:610px;height:1px;background:#c8c8c8"></div>
<div class="a" style="left:740px;top:181px;width:1px;height:476px;background:#c8c8c8"></div>
<div class="a" style="left:159px;top:240px;width:145px;height:10px;background:#00544a"></div>
<div class="a" style="left:159px;top:250px;width:145px;height:22px;background:#009688;box-shadow:0 1px 1.5px rgba(0,0,0,0.25)"></div>
<svg class="a" style="left:260.3px;top:242.5px" width="40" height="6" viewBox="0 0 40 6">
 <path d="M0 0.8Q2.8-0.6 5.6 0.8L2.8 5z" fill="#fff"/>
 <path d="M9.6 5.2h5V0.4z" fill="#fff" opacity="0.9"/>
 <rect x="19.6" y="0.9" width="3.6" height="4.3" fill="#fff"/><rect x="20.6" y="0" width="1.6" height="1" fill="#fff"/>
</svg>
<div class="t" style="left:288.10px;top:243.00px;font-size:6.00px;color:#fff;transform:scaleX(0.8138);">12:30</div>
<svg class="a" style="left:165.5px;top:257.6px" width="9" height="5" viewBox="0 0 9 5"><path d="M0 0.5h9M0 2.5h9M0 4.5h9" stroke="#fff" stroke-width="1"/></svg>
<div class="t" style="left:187.80px;top:258.00px;font-size:7.80px;color:#fff;font-weight:700;transform:scaleX(0.9777);">All</div>
<svg class="a" style="left:201px;top:260.5px" width="4.5" height="2.5" viewBox="0 0 4.5 2.5"><path d="M0 0h4.5L2.25 2.5z" fill="#fff"/></svg>
<svg class="a" style="left:274px;top:257.5px" width="8" height="8" viewBox="0 0 8 8"><circle cx="3" cy="3" r="2.4" fill="none" stroke="#fff" stroke-width="1"/><path d="M4.8 4.8L7.4 7.4" stroke="#fff" stroke-width="1.3"/></svg>
<svg class="a" style="left:293.6px;top:257.6px" width="2" height="7" viewBox="0 0 2 7"><circle cx="1" cy="1" r="0.8" fill="#fff"/><circle cx="1" cy="3.5" r="0.8" fill="#fff"/><circle cx="1" cy="6" r="0.8" fill="#fff"/></svg>
<svg class="a" style="left:165px;top:282.6px" width="9" height="8.6" viewBox="0 0 24 23"><path d="M12 0l3.5 7.6 8.3 0.9-6.2 5.6 1.8 8.2L12 18.1l-7.4 4.2 1.8-8.2L0.2 8.5l8.3-0.9z" fill="#009688"/></svg>
<div class="t" style="left:187.80px;top:284.00px;font-size:6.90px;color:#333;">Janet Perkins</div>
<div class="a" style="left:281px;top:279.0px;width:16px;height:16px;border-radius:50%;background:#bdbdbd"></div>
<div class="t" style="left:187.80px;top:307.00px;font-size:6.90px;color:#333;transform:scaleX(1.0370);">Mary Johnson</div>
<div class="a" style="left:281px;top:302.0px;width:16px;height:16px;border-radius:50%;background:#bdbdbd"></div>
<div class="t" style="left:187.80px;top:329.00px;font-size:6.90px;color:#333;">Peter Carlsson</div>
<div class="a" style="left:281px;top:324.0px;width:16px;height:16px;border-radius:50%;background:#bdbdbd"></div>
<div class="t" style="left:187.80px;top:352.00px;font-size:6.90px;color:#333;transform:scaleX(1.0299);">Trevor Hansen</div>
<div class="a" style="left:281px;top:346.2px;width:16px;height:16px;border-radius:50%;background:#bdbdbd"></div>
<div class="t" style="left:187.80px;top:381.00px;font-size:6.90px;color:#333;transform:scaleX(1.0504);">Aaron Bennett</div>
<div class="a" style="left:281px;top:376.0px;width:16px;height:16px;border-radius:50%;background:#bdbdbd"></div>
<div class="t" style="left:187.80px;top:404.00px;font-size:6.90px;color:#333;transform:scaleX(1.0283);">Abbey Christensen</div>
<div class="a" style="left:281px;top:398.0px;width:16px;height:16px;border-radius:50%;background:#bdbdbd"></div>
<div class="t" style="left:187.80px;top:426.00px;font-size:6.90px;color:#333;transform:scaleX(1.0493);">Ali Connors</div>
<div class="a" style="left:281px;top:420.7px;width:16px;height:16px;border-radius:50%;background:#bdbdbd"></div>
<div class="t" style="left:187.80px;top:449.00px;font-size:6.90px;color:#333;transform:scaleX(1.0463);">Alex Nelson</div>
<div class="a" style="left:281px;top:443.0px;width:16px;height:16px;border-radius:50%;background:#bdbdbd"></div>
<div class="t" style="left:187.80px;top:471.00px;font-size:6.90px;color:#333;transform:scaleX(1.0379);">Anthony Stevens</div>
<div class="a" style="left:281px;top:465.4px;width:16px;height:16px;border-radius:50%;background:#bdbdbd"></div>
<div class="a" style="left:188px;top:369px;width:117px;height:1px;background:#e4e4e4"></div>
<div class="t" style="left:166.70px;top:380.00px;font-size:8.40px;color:#009688;transform:scaleX(1.2671);">A</div>
<div class="a" style="left:159px;top:478px;width:145px;height:20px;background:#000"></div>
<svg class="a" style="left:188.0px;top:484.5px" width="6" height="7" viewBox="0 0 6 7"><path d="M5.5 0.5v6L0.6 3.5z" fill="none" stroke="#fff" stroke-width="0.9" stroke-linejoin="round"/></svg>
<div class="a" style="left:228.0px;top:485px;width:6px;height:6px;border:1px solid #fff;border-radius:50%"></div>
<div class="a" style="left:268.5px;top:485px;width:6px;height:6px;border:1px solid #fff"></div>
<div class="a" style="left:353px;top:239px;width:145px;height:9px;background:#00544a"></div>
<div class="a" style="left:353px;top:248px;width:145px;height:23px;background:#009688;box-shadow:0 1px 1.5px rgba(0,0,0,0.25)"></div>
<svg class="a" style="left:454.6px;top:241.0px" width="40" height="6" viewBox="0 0 40 6">
 <path d="M0 0.8Q2.8-0.6 5.6 0.8L2.8 5z" fill="#fff"/>
 <path d="M9.6 5.2h5V0.4z" fill="#fff" opacity="0.9"/>
 <rect x="19.6" y="0.9" width="3.6" height="4.3" fill="#fff"/><rect x="20.6" y="0" width="1.6" height="1" fill="#fff"/>
</svg>
<div class="t" style="left:481.80px;top:241.00px;font-size:6.20px;color:#fff;transform:scaleX(0.7901);">12:30</div>
<svg class="a" style="left:361px;top:257px" width="7" height="6" viewBox="0 0 7 6"><path d="M6.6 3H1M3.4 0.6L0.8 3l2.6 2.4" fill="none" stroke="#fff" stroke-width="1"/></svg>
<div class="t" style="left:382.10px;top:257.00px;font-size:8.20px;color:#fff;transform:scaleX(0.9723);-webkit-text-stroke:0.15px #fff;">Edit Contact</div>
<svg class="a" style="left:483.5px;top:257px" width="8" height="6" viewBox="0 0 8 6"><path d="M0.4 3l2.4 2.4L7.6 0.4" fill="none" stroke="#fff" stroke-width="1.1"/></svg>
<div class="a" style="left:353px;top:271px;width:145px;height:74px;background:#e6e6e6;overflow:hidden"><div class="a" style="left:56.5px;top:10px;width:32.4px;height:32.4px;border-radius:50%;background:#d2d2d2"></div><div class="a" style="left:40px;top:50px;width:65px;height:40px;border-radius:32px 32px 0 0/24px 24px 0 0;background:#d2d2d2"></div></div>
<div class="a" style="left:468px;top:333.5px;width:23px;height:23px;border-radius:50%;background:#009688;box-shadow:0 1px 1.5px rgba(0,0,0,0.25)"></div>
<svg class="a" style="left:474.5px;top:341px" width="10" height="8" viewBox="0 0 10 8"><path d="M0 1.6h2.4L3.4 0.2h3.2l1 1.4H10V8H0z" fill="#fff"/><circle cx="5" cy="4.6" r="1.9" fill="#009688"/><circle cx="5" cy="4.6" r="1" fill="#fff"/></svg>
<svg class="a" style="left:361px;top:362.5px" width="7" height="7" viewBox="0 0 7 7"><circle cx="3.5" cy="1.8" r="1.8" fill="#757575"/><path d="M0 7c0-2 1.6-3 3.5-3S7 5 7 7z" fill="#757575"/></svg>
<div class="t" style="left:381.40px;top:363.00px;font-size:6.90px;color:#333;transform:scaleX(0.9371);">Ali Connors</div>
<div class="a" style="left:381px;top:373px;width:111px;height:1px;background:#e0e0e0"></div>
<svg class="a" style="left:360.5px;top:382px" width="7.5" height="7.5" viewBox="0 0 24 24"><path d="M6.6 10.8c1.4 2.8 3.8 5.1 6.6 6.6l2.2-2.2c0.3-0.3 0.7-0.4 1-0.2 1.1 0.4 2.3 0.6 3.6 0.6 0.6 0 1 0.4 1 1V20c0 0.6-0.4 1-1 1C10.6 21 3 13.4 3 4c0-0.6 0.4-1 1-1h3.5c0.6 0 1 0.4 1 1 0 1.3 0.2 2.5 0.6 3.6 0.1 0.3 0 0.7-0.2 1z" fill="#757575"/></svg>
<div class="t" style="left:381.40px;top:383.00px;font-size:6.90px;color:#333;transform:scaleX(0.9463);">650</div>
<div class="a" style="left:392.6px;top:381.5px;width:1px;height:7.5px;background:#009688"></div>
<div class="a" style="left:381px;top:392.8px;width:69px;height:1.2px;background:#009688"></div>
<div class="t" style="left:455.40px;top:383.00px;font-size:6.90px;color:#c4c4c4;">Mobile</div>
<div class="a" style="left:456.5px;top:393px;width:35.5px;height:1px;background:#e0e0e0"></div>
<svg class="a" style="left:487.0px;top:385.5px" width="4" height="2.2" viewBox="0 0 4 2.2"><path d="M0 0h4L2 2.2z" fill="#9e9e9e"/></svg>
<svg class="a" style="left:360px;top:402px" width="8.2" height="7" viewBox="0 0 8.2 7"><path d="M0 0h8.2v7H0z" fill="#757575"/><path d="M0.4 0.6L4.1 3.6 7.8 0.6" fill="none" stroke="#fff" stroke-width="0.8"/></svg>
<div class="t" style="left:381.50px;top:402.00px;font-size:6.90px;color:#c4c4c4;transform:scaleX(0.8984);">Email</div>
<div class="a" style="left:381.5px;top:412px;width:68px;height:1px;background:#e0e0e0"></div>
<div class="t" style="left:455.30px;top:402.00px;font-size:6.90px;color:#c4c4c4;transform:scaleX(0.9705);">Work</div>
<div class="a" style="left:456.5px;top:413px;width:35.5px;height:1px;background:#e0e0e0"></div>
<svg class="a" style="left:486.8px;top:404.5px" width="4" height="2.2" viewBox="0 0 4 2.2"><path d="M0 0h4L2 2.2z" fill="#9e9e9e"/></svg>
<svg class="a" style="left:361.8px;top:421px" width="5.4" height="7.8" viewBox="0 0 5.4 7.8"><path d="M2.7 7.8C1 5.6 0 4 0 2.7a2.7 2.7 0 0 1 5.4 0c0 1.3-1 2.9-2.7 5.1z" fill="#757575"/><circle cx="2.7" cy="2.7" r="1" fill="#fff"/></svg>
<div class="t" style="left:381.50px;top:422.00px;font-size:6.90px;color:#c4c4c4;transform:scaleX(0.8893);">Address</div>
<div class="a" style="left:381.5px;top:432px;width:68px;height:1px;background:#e0e0e0"></div>
<div class="t" style="left:455.30px;top:421.00px;font-size:6.90px;color:#c4c4c4;transform:scaleX(0.9506);">Home</div>
<div class="a" style="left:456.5px;top:432px;width:35.5px;height:1px;background:#e0e0e0"></div>
<svg class="a" style="left:486.8px;top:424.0px" width="4" height="2.2" viewBox="0 0 4 2.2"><path d="M0 0h4L2 2.2z" fill="#9e9e9e"/></svg>
<svg class="a" style="left:360.5px;top:441px" width="8" height="7" viewBox="0 0 8 7"><path d="M0 2.2h1.8L4.4 0v7L1.8 4.8H0z" fill="#757575"/><path d="M5.6 1.6a2.6 2.6 0 0 1 0 3.8M6.6 0.6a4 4 0 0 1 0 5.8" fill="none" stroke="#757575" stroke-width="0.8"/></svg>
<div class="t" style="left:381.50px;top:441.00px;font-size:6.90px;color:#c4c4c4;transform:scaleX(0.9235);">Ringtone</div>
<div class="a" style="left:381.5px;top:451px;width:110px;height:1px;background:#e0e0e0"></div>
<svg class="a" style="left:361.8px;top:461px" width="5" height="5" viewBox="0 0 5 5"><path d="M2.5 0v5M0 2.5h5" stroke="#757575" stroke-width="0.8"/></svg>
<div class="t" style="left:381.50px;top:461.00px;font-size:6.90px;color:#c4c4c4;transform:scaleX(0.9597);">Add note</div>
<div class="a" style="left:381.5px;top:471px;width:110px;height:1px;background:#e0e0e0"></div>
<div class="a" style="left:353px;top:477px;width:145px;height:20px;background:#000"></div>
<svg class="a" style="left:382px;top:483.5px" width="6" height="7" viewBox="0 0 6 7"><path d="M5.5 0.5v6L0.6 3.5z" fill="none" stroke="#fff" stroke-width="0.9" stroke-linejoin="round"/></svg>
<div class="a" style="left:422px;top:484px;width:6px;height:6px;border:1px solid #fff;border-radius:50%"></div>
<div class="a" style="left:463px;top:484px;width:6px;height:6px;border:1px solid #fff"></div>
<div class="a" style="left:546px;top:215px;width:157px;height:308px;background:#263238;border-radius:15px"></div>
<div class="a" style="left:552px;top:241px;width:145px;height:258px;background:#eeeeee"></div>
<div class="a" style="left:607px;top:227px;width:34px;height:4px;background:#37474f;border-radius:2px"></div>
<div class="a" style="left:677px;top:223px;width:8.4px;height:8.4px;background:#37474f;border-radius:50%"></div>
<div class="a" style="left:609px;top:506px;width:31px;height:10px;background:#37474f;border-radius:5px"></div>
<div class="t" style="left:754.50px;top:195.00px;font-size:21.10px;color:#c43e1c;transform:scaleX(0.9617);-webkit-text-stroke:0.3px #f0f0f0;">PowerMockup Shapes</div>
<svg class="a" style="left:1020px;top:200px" width="9" height="5" viewBox="0 0 9 5"><path d="M0 0h9L4.5 4.8z" fill="#5a5a5a"/></svg>
<svg class="a" style="left:1061px;top:197.5px" width="10" height="10" viewBox="0 0 10 10"><path d="M0.5 0.5l9 9M9.5 0.5l-9 9" stroke="#444" stroke-width="1.6"/></svg>
<div class="a" style="left:748px;top:220px;width:334px;height:431px;background:#e8e8e8"></div>
<div class="a" style="left:750px;top:223px;width:328px;height:24px;background:#fff;border:1px solid #a8a8a8;border-top-color:#8c8c8c"></div>
<div class="t" style="left:753.20px;top:228.00px;font-size:11.60px;color:#8a8a8a;font-style:italic;transform:scaleX(0.9711);">Search shapes</div>
<svg class="a" style="left:1061px;top:229px" width="12" height="12" viewBox="0 0 12 12"><circle cx="4.8" cy="4.8" r="4" fill="none" stroke="#9a9a9a" stroke-width="1.3"/><path d="M7.8 7.8l3.6 3.6" stroke="#9a9a9a" stroke-width="1.8"/></svg>
<div class="t" style="left:754.50px;top:254.00px;font-size:11.60px;color:#d04020;font-weight:700;transform:scaleX(0.9940);">My Shapes</div>
<div class="t" style="left:823.50px;top:254.00px;font-size:11.60px;color:#262626;transform:scaleX(0.9509);">Shared Shapes</div>
<svg class="a" style="left:1057.5px;top:256px" width="6" height="9" viewBox="0 0 6 9"><path d="M0 0l5.8 4.5L0 9z" fill="#808080"/></svg>
<svg class="a" style="left:1067.5px;top:256px" width="9" height="9" viewBox="0 0 9 9"><path d="M4.5 0v9M0 4.5h9" stroke="#808080" stroke-width="1.8"/></svg>
<div class="a" style="left:751px;top:273px;width:328px;height:328px;background:#fff"></div>
<div class="a" style="left:751px;top:273px;width:3px;height:207px;background:#e8e8e8"></div>
<div class="a" style="left:755px;top:273px;width:3px;height:46px;background:#e6e6e6"></div>
<div class="a" style="left:760px;top:273px;width:298px;height:4px;overflow:hidden"><div class="a" style="left:4px;top:-8.6px;font-size:11.6px;line-height:1;white-space:nowrap;color:#262626;transform:scaleX(0.97);transform-origin:0 0">to add a custom shape select it on the slide, then click the</div></div>
<div class="t" style="left:770.70px;top:290.00px;font-size:9.60px;color:#c4c4c4;transform:scaleX(1.0670);">Title</div>
<div class="t" style="left:803.40px;top:290.00px;font-size:12.20px;color:#808080;transform:scaleX(0.9684);">Text (Title)</div>
<div class="a" style="left:914px;top:288.5px;width:32px;height:14px;background:#c4c4c4"></div>
<div class="t" style="left:917.50px;top:293.00px;font-size:6.00px;color:#fff;transform:scaleX(1.4657);">Tooltip</div>
<div class="t" style="left:953.30px;top:290.00px;font-size:12.20px;color:#808080;transform:scaleX(1.0658);">Tooltip</div>
<div class="a" style="left:755px;top:319px;width:305px;height:2px;background:#e6e6e6"></div>
<div class="a" style="left:755px;top:322px;width:305px;height:23px;background:#e8e8e8"></div>
<svg class="a" style="left:759.7px;top:330px" width="7" height="7" viewBox="0 0 7 7"><path d="M6.6 0.2V6.6H0.2z" fill="#707070"/></svg>
<div class="t" style="left:772.10px;top:328.00px;font-size:12.20px;color:#262626;transform:scaleX(1.0056);">Other</div>
<div class="a" style="left:755px;top:345px;width:3px;height:132px;background:#e6e6e6"></div><div class="a" style="left:755px;top:477px;width:305px;height:2px;background:#e6e6e6"></div>
<div class="a" style="left:770.7px;top:352px;width:18px;height:31.7px;background:#eeeeee"></div>
<div class="t" style="left:803.50px;top:362.00px;font-size:12.20px;color:#262626;transform:scaleX(0.9832);">Background</div>
<div class="a" style="left:914px;top:367px;width:31.6px;height:1px;background:#8a8a8a"></div>
<div class="t" style="left:953.80px;top:362.00px;font-size:12.20px;color:#262626;transform:scaleX(0.9873);">Divider</div>
<div class="a" style="left:770.7px;top:395px;width:18px;height:32px;background:#bdbdbd"></div>
<div class="t" style="left:803.50px;top:405.00px;font-size:12.20px;color:#262626;transform:scaleX(0.9781);">Modal Overlay</div>
<div class="a" style="left:910.3px;top:389.9px;width:148.5px;height:41.5px;background:#fce4dc;border:1px solid #f3a88c"></div>
<div class="a" style="left:922.2px;top:395px;width:15.8px;height:32px;background:#eeeeee;border:1.6px solid #263238;border-width:3px 1.4px 3px 1.4px;border-radius:2.5px"></div>
<div class="t" style="left:953.80px;top:405.00px;font-size:12.20px;color:#262626;transform:scaleX(0.9746);">Phone</div>
<div class="a" style="left:779px;top:438px;width:1px;height:31px;background:#e0e0e0"></div>
<div class="a" style="left:778px;top:443.7px;width:3px;height:14px;background:#c8c8c8;border-radius:1px"></div>
<div class="t" style="left:803.50px;top:448.00px;font-size:12.20px;color:#999;transform:scaleX(0.9795);">Scroll Indicator</div>
<svg class="a" style="left:913.5px;top:450px" width="33" height="5" viewBox="0 0 33 5"><path d="M2 3.6V1.6h29v2" fill="none" stroke="#e6e6e6" stroke-width="1.6"/><circle cx="1.4" cy="3.8" r="1" fill="#ddd"/><circle cx="31.6" cy="3.8" r="1" fill="#ddd"/></svg>
<div class="t" style="left:953.80px;top:448.00px;font-size:12.20px;color:#a0a0a0;transform:scaleX(0.9536);">Text Selection</div>
<div class="a" style="left:751px;top:480px;width:309px;height:2px;background:#e8e8e8"></div>
<div class="a" style="left:751px;top:483px;width:309px;height:23px;background:#e8e8e8"></div>
<svg class="a" style="left:756.3px;top:491.5px" width="7" height="7" viewBox="0 0 7 7"><path d="M6.6 0.2V6.6H0.2z" fill="#707070"/></svg>
<div class="t" style="left:768.00px;top:489.00px;font-size:12.20px;color:#262626;transform:scaleX(0.9473);">Common Wireframe Shapes</div>
<div class="a" style="left:751px;top:506px;width:3px;height:95px;background:#e8e8e8"></div>
<div class="a" style="left:755px;top:507px;width:305px;height:23px;background:#e8e8e8"></div>
<svg class="a" style="left:760.4px;top:514.5px" width="7" height="7" viewBox="0 0 7 7"><path d="M6.6 0.2V6.6H0.2z" fill="#707070"/></svg>
<div class="t" style="left:772.70px;top:513.00px;font-size:12.20px;color:#262626;transform:scaleX(0.8773);">Basic</div>
<div class="a" style="left:755px;top:530px;width:3px;height:71px;background:#e6e6e6"></div>
<svg class="a" style="left:772.5px;top:537.5px" width="16" height="31" viewBox="0 0 16 31"><path d="M1.4 0.6l6.8 7.2-5.8 7 5.8 7.6-6.6 8M5.4 0.6l8.8 7.2-7.4 7 7.4 7.6-8.4 8" fill="none" stroke="#8a8a8a" stroke-width="0.9"/></svg>
<div class="t" style="left:803.50px;top:547.00px;font-size:12.20px;color:#262626;transform:scaleX(1.0092);">Cutout</div>
<div class="a" style="left:916.3px;top:552px;width:27.4px;height:1px;background:#8a8a8a"></div>
<div class="t" style="left:953.30px;top:547.00px;font-size:12.20px;color:#262626;transform:scaleX(0.9743);">Line</div>
<div class="a" style="left:764px;top:580px;width:32px;height:21px;background:repeating-linear-gradient(135deg,#e3e3e3 0 3px,#d3d3d3 3px 4.5px)"></div>
<div class="t" style="left:803.50px;top:582.00px;font-size:12.20px;color:#262626;">Modal Dialog</div>
<div class="t" style="left:803.50px;top:598.00px;font-size:12.20px;color:#262626;">Overlay</div>
<div class="a" style="left:916.3px;top:582.3px;width:27.4px;height:27.4px;border:1px solid #6a6a6a;border-radius:50%"></div>
<div class="t" style="left:953.30px;top:590.00px;font-size:12.20px;color:#262626;transform:scaleX(0.9335);">Oval Shape</div>
<div class="a" style="left:1061px;top:274.5px;width:17px;height:326px;background:#f0f0f0"></div>
<svg class="a" style="left:1064.8px;top:281px" width="8" height="6" viewBox="0 0 8 6"><path d="M0.6 5.4L4 1.6l3.4 3.8" fill="none" stroke="#505050" stroke-width="1.8"/></svg>
<div class="a" style="left:1061.2px;top:406.7px;width:15px;height:20.2px;background:#c8c8c8"></div>
<svg class="a" style="left:1065px;top:589px" width="8" height="6" viewBox="0 0 8 6"><path d="M0.6 0.6L4 4.4l3.4-3.8" fill="none" stroke="#505050" stroke-width="1.8"/></svg>
<div class="a" style="left:750.6px;top:600.7px;width:327.2px;height:48.2px;background:#dd5a3b"></div>
<svg class="a" style="left:758.5px;top:608.5px" width="33" height="32" viewBox="0 0 33 32"><circle cx="16.2" cy="16" r="14.8" fill="none" stroke="#fff" stroke-width="2.2"/><path d="M16.2 7.2v11" fill="none" stroke="#fff" stroke-width="2.6"/><path d="M10 16.4h12.4l-6.2 7.6z" fill="#fff"/></svg>
<div class="t" style="left:800.50px;top:615.00px;font-size:19.20px;color:#fff;transform:scaleX(0.8757);-webkit-text-stroke:0.35px #dd5a3b;">Download More Shapes...</div>
<svg class="a" style="left:1062.7px;top:606px" width="10" height="6" viewBox="0 0 10 6"><path d="M0.6 0.6L5 4.8l4.4-4.2" fill="none" stroke="#fff" stroke-width="1.6"/></svg>
<div class="a" style="left:1px;top:659px;width:1089px;height:1px;background:#d6d6d6"></div>
<div class="a" style="left:1px;top:660px;width:1089px;height:21px;background:#f3f3f3"></div>
<div class="t" style="left:9.50px;top:664.00px;font-size:11.60px;color:#404040;transform:scaleX(0.9724);">Slide 1 of 1</div>
<svg class="a" style="left:85px;top:664px" width="15" height="13" viewBox="0 0 15 13"><path d="M7 1.4C5.6 0.6 3 0.5 0.5 0.5v11c2.5 0 5 0.2 6.5 1V1.4c1.4-0.8 4-0.9 6.5-0.9v6.6M7 1.4v8" fill="none" stroke="#333" stroke-width="1"/><path d="M8.4 9.4l1.8 2.2 3.4-3.8" fill="none" stroke="#333" stroke-width="1"/></svg>
<div class="t" style="left:116.40px;top:664.00px;font-size:11.60px;color:#404040;transform:scaleX(0.9809);">English (United States)</div>
<svg class="a" style="left:249px;top:663px" width="15" height="15" viewBox="0 0 15 15"><circle cx="5.6" cy="2.2" r="1.7" fill="none" stroke="#333" stroke-width="1"/><path d="M0.6 4.6c3 1.2 7.2 1.2 10 0M5.6 5.6v3.6l-2.8 5.2M5.6 9.2l1.6 2.4" fill="none" stroke="#333" stroke-width="1"/><path d="M8.6 9.2l5 5M13.6 9.2l-5 5" stroke="#333" stroke-width="1"/></svg>
<div class="t" style="left:267.10px;top:664.00px;font-size:11.60px;color:#404040;transform:scaleX(0.9813);">Accessibility: Investigate</div>
<svg class="a" style="left:653px;top:662px" width="18" height="17" viewBox="0 0 18 17"><path d="M5.6 3.6L9 0.8l3.4 2.8" fill="none" stroke="#404040" stroke-width="1"/><path d="M0.6 7.6h16.6M0.6 11.2h16.6M0.6 14.8h16.6" stroke="#404040" stroke-width="1"/></svg>
<div class="t" style="left:672.50px;top:664.00px;font-size:11.60px;color:#404040;transform:scaleX(0.9906);">Notes</div>
<div class="a" style="left:721px;top:660px;width:40px;height:21px;background:#d9d9d9"></div>
<svg class="a" style="left:734px;top:664px" width="15" height="13" viewBox="0 0 15 13"><path d="M0.5 0.5h13v11h-13z M3.5 0.5v11 M3.5 8.5h10" fill="none" stroke="#262626" stroke-width="1"/><rect x="5.5" y="2.5" width="6" height="4" fill="none" stroke="#262626" stroke-width="1"/></svg>
<svg class="a" style="left:774px;top:664px" width="14" height="13" viewBox="0 0 14 13"><rect x="0.6" y="0.6" width="5" height="4.6" fill="none" stroke="#404040" stroke-width="1"/><rect x="8.4" y="0.6" width="5" height="4.6" fill="none" stroke="#404040" stroke-width="1"/><rect x="0.6" y="7.8" width="5" height="4.6" fill="none" stroke="#404040" stroke-width="1"/><rect x="8.4" y="7.8" width="5" height="4.6" fill="none" stroke="#404040" stroke-width="1"/></svg>
<svg class="a" style="left:813.5px;top:664px" width="14" height="13" viewBox="0 0 14 13"><path d="M7 2v10.4M0.6 0.6H5.6L7 2l1.4-1.4h5v11.8H8.4L7 12.4l-1.4-0.8H0.6z" fill="none" stroke="#404040" stroke-width="1"/><path d="M2 4h3M2 6h3M2 8h3M9 4h3M9 6h3M9 8h3" stroke="#404040" stroke-width="0.7"/></svg>
<svg class="a" style="left:853px;top:663.5px" width="15" height="14" viewBox="0 0 15 14"><path d="M0.6 0.6h13.8M1.6 0.6v7.8h11.8V0.6M7.5 8.4v4M4.6 13.4l2.9-2 2.9 2" fill="none" stroke="#404040" stroke-width="1"/><rect x="4" y="3" width="5" height="3" fill="none" stroke="#404040" stroke-width="0.8"/></svg>
<div class="a" style="left:887px;top:669.5px;width:7px;height:1px;background:#404040"></div>
<div class="a" style="left:899.5px;top:669.5px;width:99px;height:1px;background:#404040"></div>
<div class="a" style="left:950.5px;top:667px;width:1px;height:6px;background:#404040"></div>
<div class="a" style="left:928px;top:663.5px;width:5px;height:12px;background:#404040"></div>
<svg class="a" style="left:1004.5px;top:665.5px" width="8" height="8" viewBox="0 0 8 8"><path d="M4 0v8M0 4h8" stroke="#404040" stroke-width="1"/></svg>
<div class="t" style="left:1026.00px;top:664.00px;font-size:11.60px;color:#404040;transform:scaleX(0.9308);">61%</div>
<svg class="a" style="left:1057px;top:661px" width="18" height="17" viewBox="0 0 18 17"><rect x="6.5" y="5.5" width="6" height="6" fill="none" stroke="#262626" stroke-width="1.1"/><path d="M7 3.6L9.5 1.2 12 3.6M7 13.4l2.5 2.4 2.5-2.4M14.4 6l2.4 2.5-2.4 2.5M4.6 6L2.2 8.5 4.6 11" fill="none" stroke="#262626" stroke-width="1"/></svg>
</body></html>
